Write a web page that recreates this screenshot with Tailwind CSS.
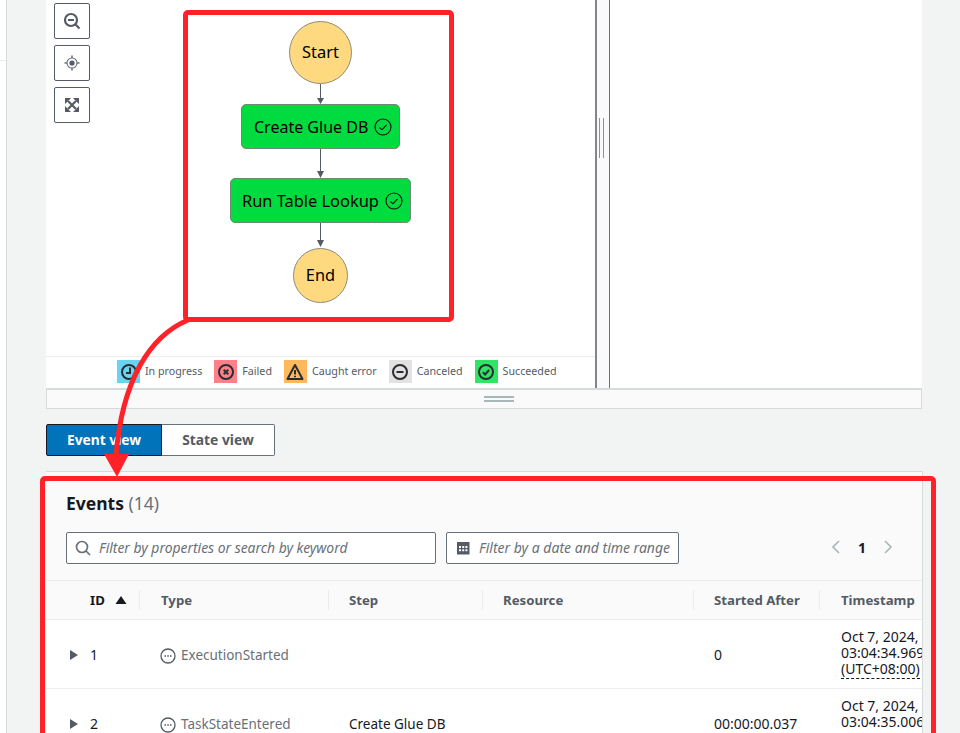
<!DOCTYPE html>
<html>
<head>
<meta charset="utf-8">
<script src="https://cdn.jsdelivr.net/npm/@tailwindcss/browser@4"></script>
</head>
<body class="m-0 overflow-hidden">
<div class="relative w-[960px] h-[733px] overflow-hidden bg-[#f2f3f3] font-['Noto_Sans',sans-serif] text-[#16191f] flex">
  <!-- left rail -->
  <div class="w-[7px] h-full bg-white border-r border-[#d5dbdb] shrink-0">
    <div class="h-[61px] border-b border-[#eaeded]"></div>
  </div>
  <!-- main -->
  <div class="ml-[39px] w-[876px] flex flex-col h-full shrink-0">
    <!-- graph panel -->
    <div class="h-[388px] flex bg-white shrink-0">
      <div class="w-[549px] flex flex-col">
        <div class="relative flex-1">
          <div class="absolute left-[8px] top-[3px] flex flex-col gap-[6px]">
            <div class="w-9 h-9 bg-white border border-[#545b64] rounded-[2px] flex items-center justify-center">
              <svg width="18" height="18" viewBox="0 0 18 18" fill="none" stroke="#545b64" stroke-width="2.200"><circle cx="8" cy="8" r="6"/><path d="M5 8h6M12.500 12.500l4 4"/></svg>
            </div>
            <div class="w-9 h-9 bg-white border border-[#545b64] rounded-[2px] flex items-center justify-center">
              <svg width="18" height="18" viewBox="0 0 18 18" fill="none" stroke="#6b727a" stroke-width="1.100"><circle cx="9" cy="9" r="5"/><circle cx="9" cy="9" r="2.600" fill="#545b64" stroke="none"/><path stroke-width="1.600" d="M9 1.500v2.500M9 14v2.500M1.500 9h2.500M14 9h2.500"/></svg>
            </div>
            <div class="w-9 h-9 bg-white border border-[#545b64] rounded-[2px] flex items-center justify-center">
              <svg width="16" height="16" viewBox="0 0 16 16" fill="#545b64" stroke="none"><path d="M1 1h6L1 7zM15 1v6L9 1zM15 15H9l6-6zM1 15V9l6 6z"/><path fill="none" stroke="#545b64" stroke-width="2.200" d="M4 4l8 8M12 4l-8 8"/></svg>
            </div>
          </div>
          <!-- state machine diagram -->
          <svg class="absolute left-[240px] top-[80px]" width="70" height="190" viewBox="0 0 70 190" fill="none">
            <g stroke="#545b64" stroke-width="1"><path d="M34.500 4V20M34.500 68V92M34.500 143V160"/></g>
            <g fill="#545b64"><path d="M31 18h7l-3.500 6zM31 91h7l-3.500 7zM31 160h7l-3.500 7z"/></g>
          </svg>
          <div class="absolute left-[243px] top-[21px] w-[63px] h-[63px] rounded-full bg-[#ffd97f] border border-[#8c8c7c] flex items-center justify-center text-[16.400px] text-black">Start</div>
          <div class="absolute left-[195px] top-[104px] w-[159px] h-[45px] rounded-[5px] bg-[#00dc3f] border border-[#6d8a74] flex items-center pl-[12px] gap-[6px] text-[16px] text-black whitespace-nowrap">
            <span>Create Glue DB</span>
            <svg width="18" height="18" viewBox="0 0 18 18" fill="none" stroke="#111" stroke-width="1.100"><circle cx="9" cy="9" r="8"/><path d="M5.500 9.500l2.500 2.300 4.500-5"/></svg>
          </div>
          <div class="absolute left-[184px] top-[178px] w-[181px] h-[45px] rounded-[5px] bg-[#00dc3f] border border-[#6d8a74] flex items-center pl-[11px] gap-[6px] text-[16.400px] text-black whitespace-nowrap">
            <span class="translate-y-px">Run Table Lookup</span>
            <svg width="18" height="18" viewBox="0 0 18 18" fill="none" stroke="#111" stroke-width="1.100"><circle cx="9" cy="9" r="8"/><path d="M5.500 9.500l2.500 2.300 4.500-5"/></svg>
          </div>
          <div class="absolute left-[247px] top-[248px] w-[55px] h-[55px] rounded-full bg-[#ffd97f] border border-[#8c8c7c] flex items-center justify-center text-[16.400px] text-black">End</div>
        </div>
        <!-- legend -->
        <div class="h-[32px] border-t border-[#eaeded] flex items-center gap-3 pl-[71px] pb-[2px] text-[10.700px] text-[#545b64] whitespace-nowrap shrink-0">
          <div class="flex items-center gap-[5px]">
            <span class="w-[23px] h-[23px] bg-[#67d4f2] flex items-center justify-center"><svg width="18" height="18" viewBox="0 0 18 18" fill="none" stroke="#2a2e33" stroke-width="2"><circle cx="9" cy="9" r="7"/><path d="M10 4.500V10H6"/></svg></span>
            <span>In progress</span>
          </div>
          <div class="flex items-center gap-[5px]">
            <span class="w-[23px] h-[23px] bg-[#ff8088] flex items-center justify-center"><svg width="18" height="18" viewBox="0 0 18 18" fill="none" stroke="#2a2e33" stroke-width="2"><circle cx="9" cy="9" r="7"/><path d="M6.700 6.700l4.600 4.600M11.300 6.700l-4.600 4.600"/></svg></span>
            <span>Failed</span>
          </div>
          <div class="flex items-center gap-[5px]">
            <span class="w-[23px] h-[23px] bg-[#ffb85c] flex items-center justify-center"><svg width="18" height="18" viewBox="0 0 18 18" fill="none" stroke="#2a2e33" stroke-width="2"><path d="M9 2l7.500 14h-15z" stroke-linejoin="round"/><path d="M9 7v4.500M9 12.800v1.500"/></svg></span>
            <span>Caught error</span>
          </div>
          <div class="flex items-center gap-[5px]">
            <span class="w-[23px] h-[23px] bg-[#e2e2e2] flex items-center justify-center"><svg width="18" height="18" viewBox="0 0 18 18" fill="none" stroke="#2a2e33" stroke-width="2"><circle cx="9" cy="9" r="7"/><path d="M5.500 9h7"/></svg></span>
            <span>Canceled</span>
          </div>
          <div class="flex items-center gap-[5px]">
            <span class="w-[23px] h-[23px] bg-[#30e464] flex items-center justify-center"><svg width="18" height="18" viewBox="0 0 18 18" fill="none" stroke="#2a2e33" stroke-width="2"><circle cx="9" cy="9" r="7"/><path d="M5.800 9.300l2.300 2.200 4-4.500"/></svg></span>
            <span>Succeeded</span>
          </div>
        </div>
      </div>
      <!-- splitter -->
      <div class="w-[15px] bg-[#fafafa] border-l-2 border-r border-l-[#80868c] border-r-[#687078] flex items-start gap-[3px] pl-[2px] pt-[118px] shrink-0">
        <span class="w-[1px] h-[40px] bg-[#879596]"></span><span class="w-[1px] h-[40px] bg-[#879596]"></span>
      </div>
      <div class="flex-1 bg-white"></div>
    </div>
    <!-- horizontal splitter -->
    <div class="h-[21px] bg-[#fafafa] border border-t-2 border-[#d5dbdb] flex flex-col items-center justify-center gap-[2px] pl-[30px] shrink-0">
      <span class="w-[30px] h-[2px] bg-[#aab7b8]"></span><span class="w-[30px] h-[2px] bg-[#aab7b8]"></span>
    </div>
    <!-- tabs -->
    <div class="flex mt-[15px] h-[32px] text-[13.800px] font-bold shrink-0">
      <div class="w-[116px] bg-[#0073bb] text-white border border-[#16191f] rounded-l-[2px] flex items-center justify-center">Event view</div>
      <div class="w-[113px] bg-white text-[#545b64] border border-l-0 border-[#687078] rounded-r-[2px] flex items-center justify-center">State view</div>
    </div>
    <!-- events -->
    <div class="mt-[15px] -mr-px flex-1 border-t border-r border-[#d5dbdb] overflow-hidden bg-white">
      <div class="h-[108px] bg-[#fafafa] px-[20px] flex flex-col">
        <div class="mt-[19px] text-[17.500px] leading-[24px] font-bold whitespace-nowrap">Events <span class="font-normal text-[#687078]">(14)</span></div>
        <div class="mt-[17px] flex items-center">
          <div class="w-[370px] h-[32px] border border-[#687078] rounded-[2px] bg-white flex items-center pl-[8px] gap-[8px] text-[13.900px] italic text-[#687078] whitespace-nowrap">
            <svg width="16" height="16" viewBox="0 0 16 16" fill="none" stroke="#687078" stroke-width="1.700"><circle cx="7" cy="7" r="5.500"/><path d="M11 11l4 4"/></svg>
            <span>Filter by properties or search by keyword</span>
          </div>
          <div class="ml-[10px] w-[233px] h-[32px] border border-[#687078] rounded-[2px] bg-white flex items-center pl-[9px] gap-[9px] text-[14px] italic text-[#687078] whitespace-nowrap">
            <svg width="14" height="14" viewBox="0 0 14 14"><rect x="1" y="1" width="12.500" height="12.500" fill="#545b64"/><path fill="#fff" d="M3 5h2v2H3zM6.200 5h2v2h-2zM9.400 5h2v2h-2zM3 8.200h2v2H3zM6.200 8.200h2v2h-2zM9.400 8.200h2v2h-2z"/></svg>
            <span class="-translate-y-px">Filter by a date and time range</span>
          </div>
          <div class="ml-[152px] flex items-center gap-[17px] text-[14px] font-bold -translate-y-px">
            <svg width="10" height="14" viewBox="0 0 10 14" fill="none" stroke="#aab7b8" stroke-width="1.700"><path d="M8 1L2 7l6 6"/></svg>
            <span>1</span>
            <svg width="10" height="14" viewBox="0 0 10 14" fill="none" stroke="#aab7b8" stroke-width="1.700"><path d="M2 1l6 6-6 6"/></svg>
          </div>
        </div>
      </div>
      <!-- table -->
      <div class="w-[930px] text-[14px] whitespace-nowrap">
        <div class="h-[40px] bg-[#fafafa] border-y border-[#eaeded] grid grid-cols-[94px_189px_154px_211px_126px_156px] items-center font-bold text-[13.200px] text-[#545b64]">
          <div class="h-[20px] pl-[44px] border-r border-[#eaeded] flex items-center gap-[10px] text-[#16191f]"><span class="translate-y-px">ID</span>
            <svg width="12" height="8" viewBox="0 0 12 8" fill="#16191f"><path d="M6 0l5.500 8H.5z"/></svg>
          </div>
          <div class="h-[20px] pl-[21px] border-r border-[#eaeded] flex items-center"><span class="translate-y-px">Type</span></div>
          <div class="h-[20px] pl-[20px] border-r border-[#eaeded] flex items-center"><span class="translate-y-px">Step</span></div>
          <div class="h-[20px] pl-[20px] border-r border-[#eaeded] flex items-center"><span class="translate-y-px">Resource</span></div>
          <div class="h-[20px] pl-[20px] border-r border-[#eaeded] flex items-center"><span class="translate-y-px">Started After</span></div>
          <div class="h-[20px] pl-[21px] flex items-center"><span class="translate-y-px">Timestamp</span></div>
        </div>
        <div class="h-[69px] bg-white border-b border-[#eaeded] grid grid-cols-[94px_189px_154px_211px_126px_156px] items-center">
          <div class="flex items-center pl-[24px] gap-[12px] pt-[1px]">
            <svg width="8" height="10" viewBox="0 0 8 10" fill="#545b64"><path d="M0 0l8 5-8 5z"/></svg><span>1</span>
          </div>
          <div class="pl-[20px] flex items-center gap-[5px] text-[13.500px] text-[#687078] pt-[3px]">
            <svg width="16" height="16" viewBox="0 0 16 16" fill="none" stroke="#545b64" stroke-width="1.300"><circle cx="8" cy="8" r="7"/><path d="M4.500 8h1.500M7.300 8h1.500M10 8h1.500" stroke-width="1.500"/></svg>
            <span>ExecutionStarted</span>
          </div>
          <div></div><div></div>
          <div class="pl-[20px] pt-[1px]">0</div>
          <div class="pl-[21px] leading-[16px] pb-[2px]">Oct 7, 2024,<br>03:04:34.969<br><span class="border-b border-dashed border-[#16191f]">(UTC+08:00)</span></div>
        </div>
        <div class="h-[69px] bg-white border-b border-[#eaeded] grid grid-cols-[94px_189px_154px_211px_126px_156px] items-center">
          <div class="flex items-center pl-[24px] gap-[12px] pt-[1px]">
            <svg width="8" height="10" viewBox="0 0 8 10" fill="#545b64"><path d="M0 0l8 5-8 5z"/></svg><span>2</span>
          </div>
          <div class="pl-[20px] flex items-center gap-[5px] text-[13.500px] text-[#687078] pt-[3px]">
            <svg width="16" height="16" viewBox="0 0 16 16" fill="none" stroke="#545b64" stroke-width="1.300"><circle cx="8" cy="8" r="7"/><path d="M4.500 8h1.500M7.300 8h1.500M10 8h1.500" stroke-width="1.500"/></svg>
            <span>TaskStateEntered</span>
          </div>
          <div class="pl-[20px] text-[13.500px] pt-[3px]">Create Glue DB</div><div></div>
          <div class="pl-[20px] pt-[1px]">00:00:00.037</div>
          <div class="pl-[21px] leading-[16px] pb-[2px]">Oct 7, 2024,<br>03:04:35.006<br><span class="border-b border-dashed border-[#16191f]">(UTC+08:00)</span></div>
        </div>
      </div>
    </div>
  </div>
  <!-- annotation overlays -->
  <div class="absolute left-[183px] top-[10px] w-[271px] h-[312px] border-[5px] border-[#ff2229] rounded-[5px]"></div>
  <div class="absolute left-[40px] top-[476px] w-[896px] h-[290px] border-[5px] border-[#ff2229] rounded-[5px]"></div>
  <svg class="absolute left-0 top-0 pointer-events-none" width="960" height="733" viewBox="0 0 960 733" fill="none">
    <path d="M188 320C150 336 122 380 116 456" stroke="#ff2229" stroke-width="5"/>
    <path d="M104 454H129L117 477Z" fill="#ff2229"/>
  </svg>
</div>
</body>
</html>
